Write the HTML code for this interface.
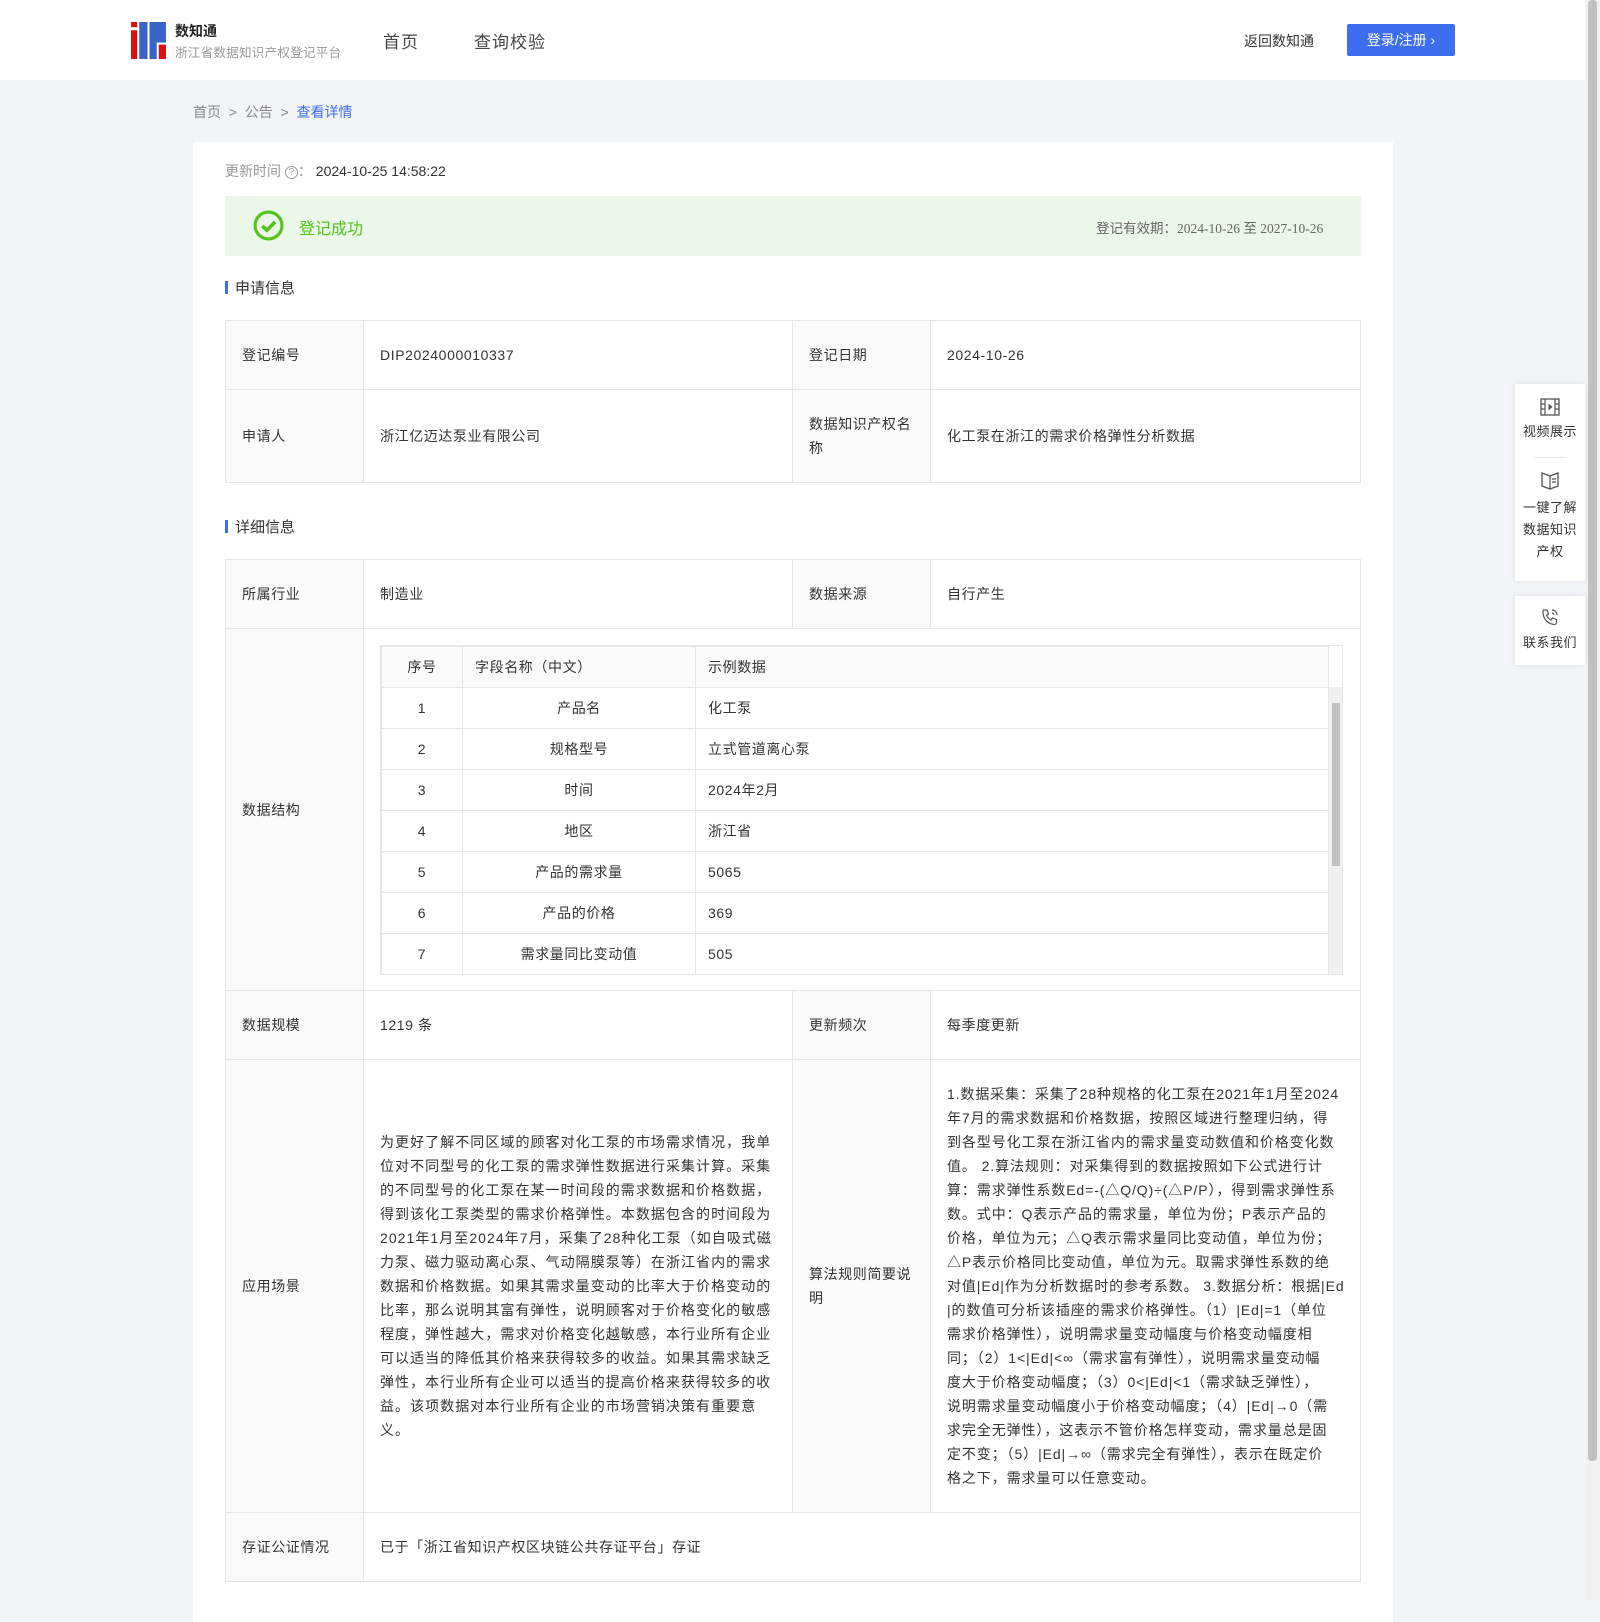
<!DOCTYPE html>
<html><head><meta charset="utf-8"><style>
*{margin:0;padding:0;box-sizing:border-box}
body{width:1600px;height:1600px;background:#f2f4f7;font-family:"Liberation Sans","Noto Sans CJK SC",sans-serif;font-size:14px;color:#333;position:relative;overflow:hidden}
.a{position:absolute}
.hdr{left:0;top:0;width:1585px;height:80px;background:#fff}
.card{left:193px;top:142px;width:1200px;height:1480px;background:#fff}
table{border-collapse:collapse;position:absolute;left:225px;width:1136px;table-layout:fixed}
td{border:1px solid #e6e6e6;padding:0 16px;vertical-align:middle;line-height:24px;color:#333;letter-spacing:0.6px}
td.l{background:#fafafa}
.it{position:absolute;left:380px;top:645px;width:963px;border:1px solid #e6e6e6}
.it table{position:static;width:948px}
.it td{height:41px;padding:0 12px;font-size:14px}
.sec{font-size:15px;color:#333}
.sec:before{content:"";display:inline-block;width:3px;height:13px;background:#3d6ef0;margin-right:7px;vertical-align:-1px}
.side{left:1515px;width:70px;background:#fff;box-shadow:0 0 6px rgba(0,0,0,.08);text-align:center;font-size:13px;color:#333;line-height:22px;letter-spacing:0.5px}
</style></head><body>
<div class="a hdr">
 <svg class="a" style="left:131px;top:22px" width="35" height="37" viewBox="0 0 34 36">
  <rect x="0" y="0" width="6" height="5" fill="#d11"/><rect x="0" y="8" width="6" height="28" fill="#d11"/>
  <rect x="8" y="0" width="8" height="36" fill="#3a63c6"/><rect x="18" y="0" width="16" height="20" fill="#3a63c6"/><rect x="18" y="20" width="7" height="16" fill="#3a63c6"/><rect x="27" y="22" width="7" height="14" fill="#d11"/>
 </svg>
 <div class="a" style="left:175px;top:21px;font-size:14px;font-weight:bold;color:#222">数知通</div>
 <div class="a" style="left:175px;top:42px;font-size:12.5px;color:#999;letter-spacing:0.3px">浙江省数据知识产权登记平台</div>
 <div class="a" style="left:383px;top:28px;font-size:17px;color:#444;letter-spacing:1px">首页</div>
 <div class="a" style="left:474px;top:28px;font-size:17px;color:#444;letter-spacing:1px">查询校验</div>
 <div class="a" style="left:1244px;top:31px;font-size:14px;color:#333">返回数知通</div>
 <div class="a" style="left:1347px;top:24px;width:108px;height:32px;background:#3d6ef0;border-radius:2px;color:#fff;font-size:14px;line-height:32px;text-align:center">登录/注册 ›</div>
</div>
<div class="a" style="left:1585px;top:0;width:15px;height:1600px;background:#f1f1f1"></div>
<div class="a" style="left:1588px;top:0;width:9px;height:1461px;background:#c1c1c1;border-radius:4px"></div>
<div class="a" style="left:193px;top:102px;font-size:14px;color:#888">首页 &nbsp;&gt;&nbsp; 公告 &nbsp;&gt;&nbsp; <span style="color:#3d6ef0">查看详情</span></div>
<div class="a card"></div>
<div class="a" style="left:225px;top:161px;color:#999">更新时间 <span style="display:inline-block;width:13px;height:13px;border:1px solid #999;border-radius:50%;font-size:10px;line-height:11px;text-align:center;vertical-align:1px">?</span>： <span style="color:#333">2024-10-25 14:58:22</span></div>
<div class="a" style="left:225px;top:196px;width:1136px;height:60px;background:#ebf7e8"></div>
<svg class="a" style="left:253px;top:210px" width="31" height="31" viewBox="0 0 30 30"><circle cx="15" cy="15" r="13" fill="none" stroke="#52c41a" stroke-width="3"/><path d="M9 15.5l4.5 4 8-8" fill="none" stroke="#52c41a" stroke-width="3.5"/></svg>
<div class="a" style="left:299px;top:215px;font-size:16px;color:#52c41a">登记成功</div>
<div class="a" style="left:1096px;top:217px;font-size:13.5px;color:#666;font-family:'Liberation Serif','Noto Sans CJK SC',serif">登记有效期：2024-10-26 至 2027-10-26</div>
<div class="a sec" style="left:225px;top:277px">申请信息</div>
<table style="top:320px">
<colgroup><col style="width:138px"><col style="width:429px"><col style="width:138px"><col></colgroup>
<tr style="height:69px"><td class="l">登记编号</td><td>DIP2024000010337</td><td class="l">登记日期</td><td>2024-10-26</td></tr>
<tr style="height:93px"><td class="l">申请人</td><td>浙江亿迈达泵业有限公司</td><td class="l">数据知识产权名称</td><td>化工泵在浙江的需求价格弹性分析数据</td></tr>
</table>
<div class="a sec" style="left:225px;top:516px">详细信息</div>
<table style="top:559px">
<colgroup><col style="width:138px"><col style="width:429px"><col style="width:138px"><col></colgroup>
<tr style="height:69px"><td class="l">所属行业</td><td>制造业</td><td class="l">数据来源</td><td>自行产生</td></tr>
<tr style="height:362px"><td class="l">数据结构</td><td colspan="3"></td></tr>
<tr style="height:69px"><td class="l">数据规模</td><td>1219 条</td><td class="l">更新频次</td><td>每季度更新</td></tr>
<tr style="height:453px"><td class="l">应用场景</td><td style="white-space:nowrap;letter-spacing:1.05px">为更好了解不同区域的顾客对化工泵的市场需求情况，我单<br>位对不同型号的化工泵的需求弹性数据进行采集计算。采集<br>的不同型号的化工泵在某一时间段的需求数据和价格数据，<br>得到该化工泵类型的需求价格弹性。本数据包含的时间段为<br>2021年1月至2024年7月，采集了28种化工泵（如自吸式磁<br>力泵、磁力驱动离心泵、气动隔膜泵等）在浙江省内的需求<br>数据和价格数据。如果其需求量变动的比率大于价格变动的<br>比率，那么说明其富有弹性，说明顾客对于价格变化的敏感<br>程度，弹性越大，需求对价格变化越敏感，本行业所有企业<br>可以适当的降低其价格来获得较多的收益。如果其需求缺乏<br>弹性，本行业所有企业可以适当的提高价格来获得较多的收<br>益。该项数据对本行业所有企业的市场营销决策有重要意<br>义。</td><td class="l">算法规则简要说明</td><td style="white-space:nowrap;letter-spacing:0.9px">1.数据采集：采集了28种规格的化工泵在2021年1月至2024<br>年7月的需求数据和价格数据，按照区域进行整理归纳，得<br>到各型号化工泵在浙江省内的需求量变动数值和价格变化数<br>值。 2.算法规则：对采集得到的数据按照如下公式进行计<br>算：需求弹性系数Ed=-(△Q/Q)÷(△P/P），得到需求弹性系<br>数。式中：Q表示产品的需求量，单位为份；P表示产品的<br>价格，单位为元；△Q表示需求量同比变动值，单位为份；<br>△P表示价格同比变动值，单位为元。取需求弹性系数的绝<br>对值|Ed|作为分析数据时的参考系数。 3.数据分析：根据|Ed<br>|的数值可分析该插座的需求价格弹性。（1）|Ed|=1（单位<br>需求价格弹性），说明需求量变动幅度与价格变动幅度相<br>同；（2）1&lt;|Ed|&lt;∞（需求富有弹性），说明需求量变动幅<br>度大于价格变动幅度；（3）0&lt;|Ed|&lt;1（需求缺乏弹性），<br>说明需求量变动幅度小于价格变动幅度；（4）|Ed|→0（需<br>求完全无弹性），这表示不管价格怎样变动，需求量总是固<br>定不变；（5）|Ed|→∞（需求完全有弹性），表示在既定价<br>格之下，需求量可以任意变动。</td></tr>
<tr style="height:69px"><td class="l">存证公证情况</td><td colspan="3">已于「浙江省知识产权区块链公共存证平台」存证</td></tr>
</table>
<div class="it" style="height:330px;overflow:hidden;background:#fff">
<table><colgroup><col style="width:81px"><col style="width:233px"><col></colgroup>
<tr style="background:#fafafa"><td style="text-align:center">序号</td><td>字段名称（中文）</td><td>示例数据</td></tr>
<tr><td style="text-align:center">1</td><td style="text-align:center">产品名</td><td>化工泵</td></tr>
<tr><td style="text-align:center">2</td><td style="text-align:center">规格型号</td><td>立式管道离心泵</td></tr>
<tr><td style="text-align:center">3</td><td style="text-align:center">时间</td><td>2024年2月</td></tr>
<tr><td style="text-align:center">4</td><td style="text-align:center">地区</td><td>浙江省</td></tr>
<tr><td style="text-align:center">5</td><td style="text-align:center">产品的需求量</td><td>5065</td></tr>
<tr><td style="text-align:center">6</td><td style="text-align:center">产品的价格</td><td>369</td></tr>
<tr><td style="text-align:center">7</td><td style="text-align:center">需求量同比变动值</td><td>505</td></tr>
</table>
<div class="a" style="left:948px;top:41px;width:14px;height:289px;background:#f1f1f1"></div>
<div class="a" style="left:951px;top:57px;width:8px;height:163px;background:#c1c1c1"></div>
</div>
<div class="a side" style="top:384px;height:197px">
 <svg style="margin-top:14px" width="20" height="18" viewBox="0 0 20 18"><rect x="1" y="1" width="18" height="16" fill="none" stroke="#555" stroke-width="1.3"/><path d="M5 1v16M15 1v16M1 6h4M1 11h4M15 6h4M15 11h4" stroke="#555" stroke-width="1.2"/><path d="M8.5 5.5l4 3.5-4 3.5z" fill="#555"/></svg>
 <div style="margin-top:-2px">视频展示</div>
 <div style="width:32px;height:1px;background:#e6e6e6;margin:14px auto 12px"></div>
 <svg width="20" height="20" viewBox="0 0 20 20"><path d="M2 3l8 3 8-3v13l-8 3-8-3z" fill="none" stroke="#555" stroke-width="1.3"/><path d="M10 6v13M12 9h4M12 12h4" stroke="#555" stroke-width="1.2"/></svg>
 <div>一键了解<br>数据知识<br>产权</div>
</div>
<div class="a side" style="top:596px;height:69px">
 <svg style="margin-top:11px" width="20" height="20" viewBox="0 0 20 20"><path d="M4 3l3 0 1.5 4-2 1.5c1 2 2.5 3.5 4.5 4.5l1.5-2 4 1.5v3c0 1-1 2-2 2C8 17 3 12 3 5c0-1 0-2 1-2z" fill="none" stroke="#555" stroke-width="1.2"/><path d="M12 3a5 5 0 0 1 5 5M12 6a2 2 0 0 1 2 2" fill="none" stroke="#555" stroke-width="1.2"/></svg>
 <div style="margin-top:-2px">联系我们</div>
</div>
</body></html>
